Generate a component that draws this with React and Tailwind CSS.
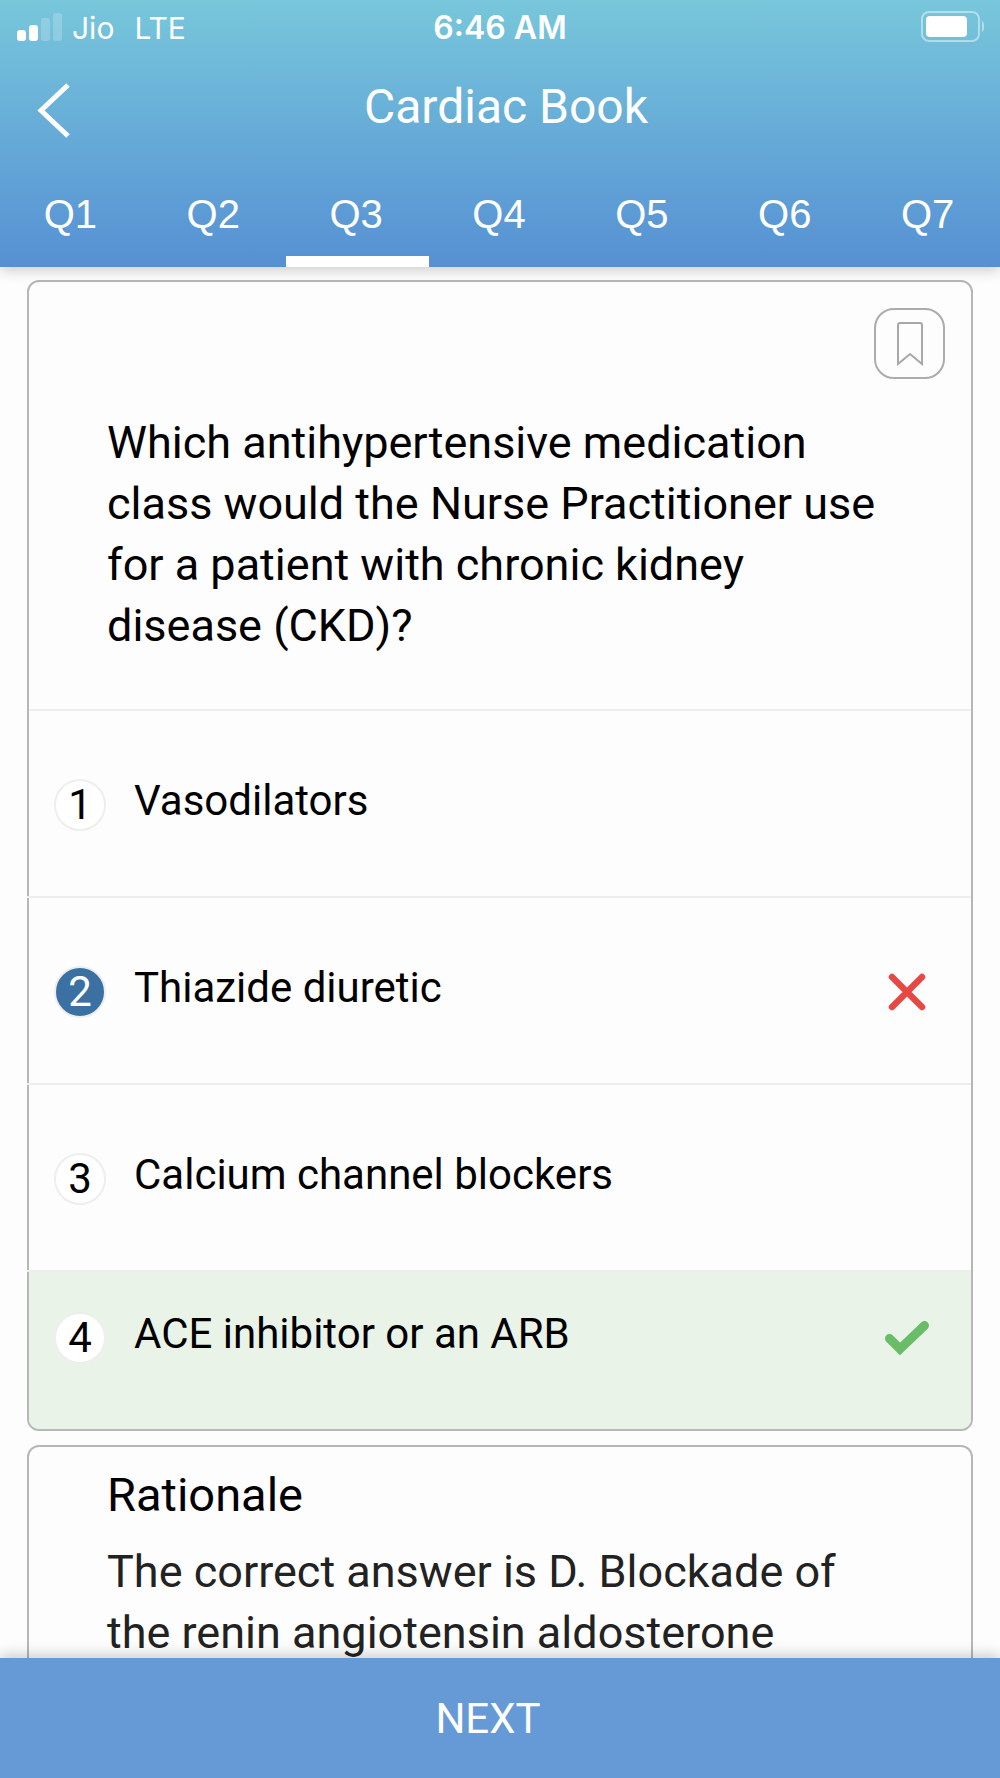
import { useState } from "react";

const tabs = ["Q1", "Q2", "Q3", "Q4", "Q5", "Q6", "Q7"];

const options = [
  { id: 1, text: "Vasodilators" },
  { id: 2, text: "Thiazide diuretic" },
  { id: 3, text: "Calcium channel blockers" },
  { id: 4, text: "ACE inhibitor or an ARB" },
];

const correctId = 4;

const StatusBar = () => {
  return (
    <div className="grid h-[54px] grid-cols-3 items-center pt-0.5 pr-4 pl-4 font-[Inter,sans-serif] leading-none">
      <div className="flex items-center text-[30px]">
        <svg width="46" height="30" viewBox="0 0 46 30" fill="white" className="mr-2.5 shrink-0">
          <rect x="1" y="17" width="9" height="11" rx="3" />
          <rect x="13" y="12" width="9" height="16" rx="3" />
          <rect x="25" y="5" width="9" height="23" rx="3" opacity="0.2" />
          <rect x="37" y="0" width="9" height="28" rx="3" opacity="0.2" />
        </svg>
        <span>Jio</span>
        <span className="ml-5">LTE</span>
      </div>
      <span className="text-center text-[32px] font-semibold">6:46 AM</span>
      <svg width="64" height="34" viewBox="0 0 64 34" fill="none" className="justify-self-end">
        <rect x="2" y="1" width="57" height="29" rx="7" stroke="white" strokeOpacity="0.45" strokeWidth="2" />
        <rect x="6" y="5" width="41" height="21" rx="4" fill="white" />
        <path d="M62 10c3 2 3 9 0 11z" fill="white" fillOpacity="0.45" />
      </svg>
    </div>
  );
};

const OptionRow = ({ option, selected, onSelect }) => {
  const isCorrect = option.id === correctId;
  return (
    <button
      type="button"
      onClick={() => onSelect(option.id)}
      className={`flex w-full cursor-pointer items-center pr-[42px] pb-[65px] pl-[25px] text-left ${
        isCorrect ? "rounded-b-[10px] bg-[#e9f3e8] pt-10" : "pt-[68px]"
      }`}
    >
      <span
        className={`flex size-[52px] shrink-0 items-center justify-center rounded-full border-2 border-[#eeeeee] text-[42px] leading-none ${
          selected ? "bg-[#3a70a2] text-white" : "bg-white"
        }`}
      >
        {option.id}
      </span>
      <span className="ml-7 flex-1 pb-2 text-[42px] leading-[44px]">{option.text}</span>
      {selected && !isCorrect && (
        <svg width="44" height="44" viewBox="0 0 44 44" fill="none" stroke="#e84843" strokeWidth="6.500" strokeLinecap="round">
          <path d="M7 7l30 30M37 7L7 37" />
        </svg>
      )}
      {isCorrect && (
        <svg width="44" height="44" viewBox="0 0 44 44" fill="none" stroke="#69bd66" strokeWidth="9" strokeLinecap="round">
          <path d="M4.500 22.500l10.500 10.500L39.500 9.500" />
        </svg>
      )}
    </button>
  );
};

export default function App() {
  const [activeTab, setActiveTab] = useState("Q3");
  const [selectedId, setSelectedId] = useState(2);
  const [saved, setSaved] = useState(false);

  return (
    <div className="flex h-screen flex-col bg-[#fdfdfd] font-[Roboto,sans-serif] text-black">
      <header className="z-10 bg-linear-to-b from-[#78c7db] to-[#5690d3] text-white shadow-[0_4px_12px_rgba(0,0,0,0.18)]">
        <StatusBar />
        <div className="flex h-[104px] items-center">
          <button type="button" aria-label="Back" className="w-[92px] cursor-pointer pt-2 pl-9">
            <svg width="36" height="56" viewBox="0 0 36 56" fill="none" stroke="white" strokeWidth="5">
              <path d="M32 3L5 28.500L32 54" />
            </svg>
          </button>
          <h1 className="flex-1 pt-0.5 text-center text-[48px] leading-[56px]">Cardiac Book</h1>
          <div className="w-20" />
        </div>
        <nav className="grid grid-cols-7">
          {tabs.map((tab) => (
            <button
              key={tab}
              type="button"
              onClick={() => setActiveTab(tab)}
              className={`h-[109px] cursor-pointer border-b-[11px] pt-3.5 pr-0.5 font-['Liberation_Sans',sans-serif] text-[40px] leading-none ${
                activeTab === tab ? "border-white" : "border-transparent"
              }`}
            >
              {tab}
            </button>
          ))}
        </nav>
      </header>

      <main className="min-h-0 flex-1 overflow-y-auto px-[27px] pt-[13px] [scrollbar-width:none]">
        <section className="rounded-xl border-2 border-[#b7b7b7]">
          <div className="flex justify-end pt-[26px] pr-[26px]">
            <button
              type="button"
              aria-label="Bookmark"
              aria-pressed={saved}
              onClick={() => setSaved(!saved)}
              className="flex size-[71px] cursor-pointer items-center justify-center rounded-[20px] border-2 border-[#acacac]"
            >
              <svg width="26" height="44" viewBox="0 0 26 44" fill={saved ? "#a8a8a8" : "none"} stroke="#a8a8a8" strokeWidth="2">
                <path d="M1 42V3q0-2 2-2h20q2 0 2 2v39L13 32z" />
              </svg>
            </button>
          </div>
          <h2 className="px-[78px] pt-[33px] pb-[53px] text-[45px] leading-[61px]">
            Which antihypertensive medication class would the Nurse Practitioner use for a patient
            with chronic kidney disease (CKD)?
          </h2>
          <ul>
            {options.map((option, index) => (
              <li key={option.id}>
                <hr className={`border-t-2 border-[#eeeeee] ${index > 0 ? "-ml-0.5" : ""}`} />
                <OptionRow
                  option={option}
                  selected={selectedId === option.id}
                  onSelect={setSelectedId}
                />
              </li>
            ))}
          </ul>
        </section>

        <section className="mt-3.5 rounded-xl border-2 border-[#b7b7b7] px-[78px] pt-5 pb-16">
          <h2 className="text-[47px] leading-[56px]">Rationale</h2>
          <p className="mt-[18px] text-[45px] leading-[61px] text-[#222222]">
            The correct answer is D. Blockade of the renin angiotensin aldosterone
          </p>
        </section>
      </main>

      <footer className="z-10 shadow-[0_-4px_12px_rgba(0,0,0,0.18)]">
        <button type="button" className="h-[120px] w-full cursor-pointer bg-[#669ad6] pr-6 text-[42px] text-white">
          NEXT
        </button>
      </footer>
    </div>
  );
}
